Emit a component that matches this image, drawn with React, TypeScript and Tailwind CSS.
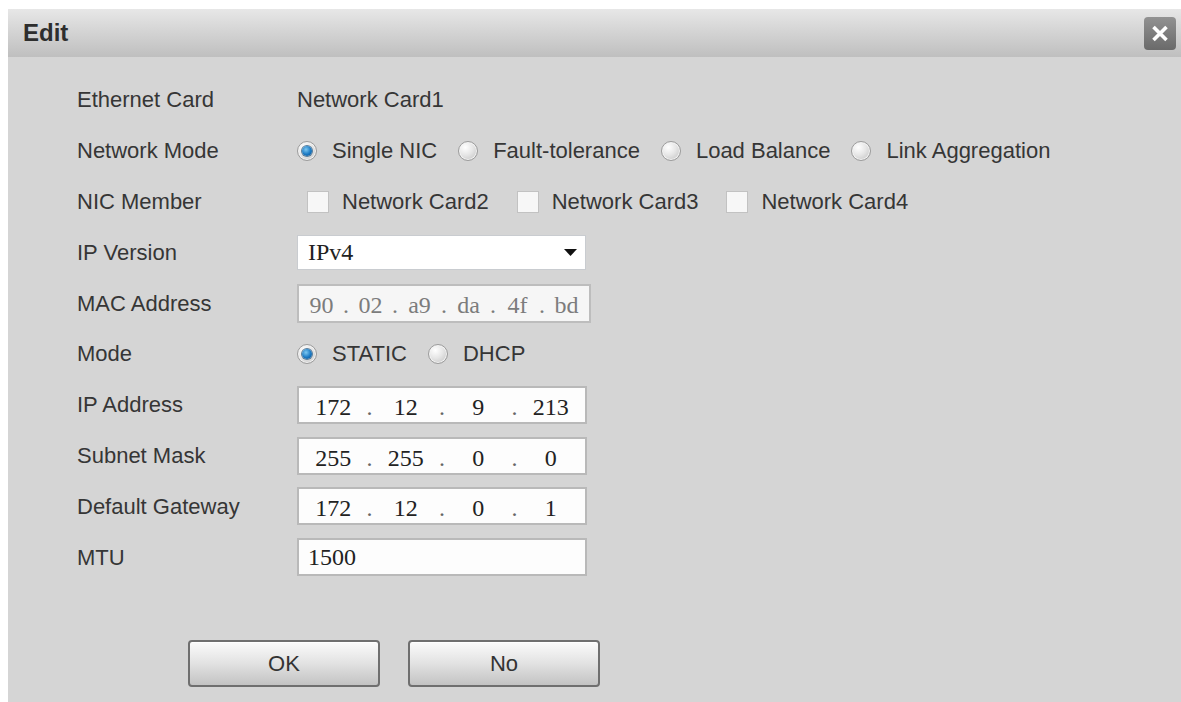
import React from "react";

const sans = "font-['Liberation_Sans',Arial,sans-serif]";
const serif = "font-['Liberation_Serif','Times_New_Roman',serif]";

function Radio({ checked }: { checked?: boolean }) {
  return (
    <span className="w-[20px] h-[20px] shrink-0 rounded-full border border-[#9c9c9c] bg-[radial-gradient(circle_at_35%_30%,#ffffff,#e6e6e6_45%,#bdbdbd)] flex items-center justify-center shadow-[inset_0_0_0_1px_#f4f4f4]">
      {checked && (
        <span className="w-[10px] h-[10px] rounded-full bg-[radial-gradient(circle_at_40%_35%,#7cc8f2,#1a78c2_55%,#0b4f8c)] shadow-[0_0_0_1px_#5a7d99]" />
      )}
    </span>
  );
}

function RadioGroup({ items, value }: { items: string[]; value: string }) {
  return (
    <div className="flex items-center gap-[21px]">
      {items.map((label) => (
        <label key={label} className="flex items-center gap-[15px]">
          <Radio checked={label === value} />
          <span>{label}</span>
        </label>
      ))}
    </div>
  );
}

function Checkbox({ label }: { label: string }) {
  return (
    <label className="flex items-center gap-[13px]">
      <span className="w-[22px] h-[22px] shrink-0 bg-[#f7f7f7] border border-[#c2c2c2]" />
      <span>{label}</span>
    </label>
  );
}

// segmented address field: one cell per octet, dots between
function IpBox({ parts }: { parts: string[] }) {
  return (
    <div
      className={`w-[290px] h-[38px] border-2 border-[#b9b9b9] bg-[#fdfdfd] flex items-baseline pt-[7px] px-[2px] text-[24px] leading-none text-[#222] ${serif}`}
    >
      {parts.map((p, i) => (
        <React.Fragment key={i}>
          {i > 0 && <span className="w-[8px] text-center text-[#666]">.</span>}
          <span className="flex-1 text-center">{p}</span>
        </React.Fragment>
      ))}
    </div>
  );
}

function MacBox({ parts }: { parts: string[] }) {
  return (
    <div
      className={`w-[294px] h-[39px] border-2 border-[#bdbdbd] bg-[#f6f6f6] flex items-baseline pt-[7px] px-[4px] text-[24px] leading-none text-[#7c7c7c] ${serif}`}
    >
      {parts.map((p, i) => (
        <React.Fragment key={i}>
          {i > 0 && <span className="w-[12px] text-center">.</span>}
          <span className="flex-1 text-center">{p}</span>
        </React.Fragment>
      ))}
    </div>
  );
}

function Row({ label, children }: { label: string; children: React.ReactNode }) {
  return (
    <div className="grid grid-cols-[220px_1fr] items-center h-[50.8px]">
      <span>{label}</span>
      <div className="flex items-center">{children}</div>
    </div>
  );
}

function Button({ children }: { children: React.ReactNode }) {
  return (
    <button className="w-[192px] h-[47px] rounded-[4px] border-2 border-[#6f6f6f] bg-linear-to-b from-[#fbfbfb] via-[#e2e2e2] to-[#c3c3c3] text-[22px] text-[#333] shadow-[inset_0_1px_0_#ffffff]">
      {children}
    </button>
  );
}

export default function App() {
  return (
    <div className={`w-[1181px] h-[702px] bg-white pt-[9px] pl-[8px] ${sans}`}>
      <div className="h-full flex flex-col bg-[#d5d5d5] text-[#363636] text-[22px]">
        {/* title bar */}
        <div className="h-[48px] shrink-0 flex items-center justify-between pl-[15px] pr-[5px] bg-linear-to-b from-[#e7e7e7] to-[#bfbfbf]">
          <span className="text-[24px] font-bold text-[#2e2e2e]">Edit</span>
          <button className="w-[32px] h-[33px] rounded-[4px] bg-linear-to-b from-[#929292] via-[#7e7e7e] to-[#6a6a6a] flex items-center justify-center">
            <svg width="32" height="33" viewBox="0 0 32 33">
              <path d="M9.5 10 L22.5 23 M22.5 10 L9.5 23" stroke="#ffffff" strokeWidth="3.6" />
            </svg>
          </button>
        </div>

        {/* form */}
        <div className="pl-[69px] pt-[17.6px] flex flex-col">
          <Row label="Ethernet Card">
            <span>Network Card1</span>
          </Row>
          <Row label="Network Mode">
            <RadioGroup
              items={["Single NIC", "Fault-tolerance", "Load Balance", "Link Aggregation"]}
              value="Single NIC"
            />
          </Row>
          <Row label="NIC Member">
            <div className="flex items-center gap-[28px] ml-[10px]">
              <Checkbox label="Network Card2" />
              <Checkbox label="Network Card3" />
              <Checkbox label="Network Card4" />
            </div>
          </Row>
          <Row label="IP Version">
            <div
              className={`w-[289px] h-[35px] bg-white border border-[#c9ccd0] flex items-center justify-between pl-[10px] pr-[8px] text-[24px] text-[#222] ${serif}`}
            >
              <span>IPv4</span>
              <svg width="13" height="7" viewBox="0 0 13 7">
                <polygon points="0,0 13,0 6.5,7" fill="#111" />
              </svg>
            </div>
          </Row>
          <Row label="MAC Address">
            <MacBox parts={["90", "02", "a9", "da", "4f", "bd"]} />
          </Row>
          <Row label="Mode">
            <RadioGroup items={["STATIC", "DHCP"]} value="STATIC" />
          </Row>
          <Row label="IP Address">
            <IpBox parts={["172", "12", "9", "213"]} />
          </Row>
          <Row label="Subnet Mask">
            <IpBox parts={["255", "255", "0", "0"]} />
          </Row>
          <Row label="Default Gateway">
            <IpBox parts={["172", "12", "0", "1"]} />
          </Row>
          <Row label="MTU">
            <div
              className={`w-[290px] h-[38px] border-2 border-[#b9b9b9] bg-[#fdfdfd] flex items-center pl-[9px] text-[24px] text-[#222] ${serif}`}
            >
              1500
            </div>
          </Row>

          <div className="flex gap-[28px] ml-[111px] mt-[57px]">
            <Button>OK</Button>
            <Button>No</Button>
          </div>
        </div>
      </div>
    </div>
  );
}
